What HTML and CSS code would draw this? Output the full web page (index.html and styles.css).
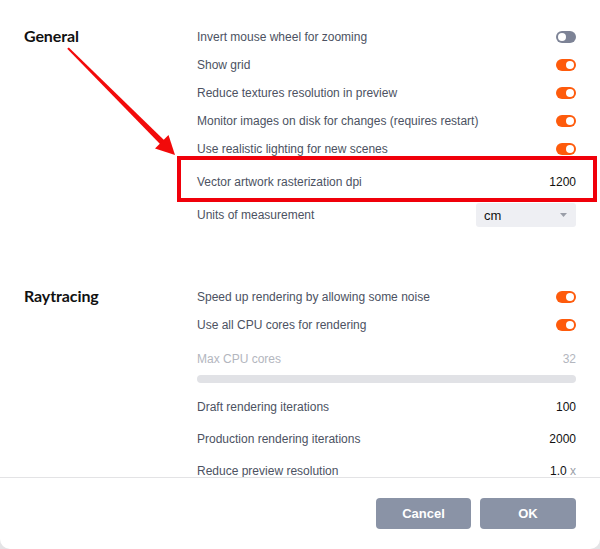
FILE: index.html
```html
<!DOCTYPE html>
<html>
<head>
<meta charset="utf-8">
<link rel="stylesheet" href="styles.css">
</head>
<body>
<div class="dialog">
  <div class="content">
    <section class="section">
      <h2 class="section-title">General</h2>
      <div class="rows">
        <div class="row"><span class="label">Invert mouse wheel for zooming</span><span class="toggle off"></span></div>
        <div class="row"><span class="label">Show grid</span><span class="toggle on"></span></div>
        <div class="row"><span class="label">Reduce textures resolution in preview</span><span class="toggle on"></span></div>
        <div class="row"><span class="label">Monitor images on disk for changes (requires restart)</span><span class="toggle on"></span></div>
        <div class="row"><span class="label">Use realistic lighting for new scenes</span><span class="toggle on"></span></div>
        <div class="row row-tall highlighted"><span class="label">Vector artwork rasterization dpi</span><span class="value">1200</span></div>
        <div class="row"><span class="label">Units of measurement</span>
          <span class="select">cm<svg class="caret" width="7" height="4" viewBox="0 0 7 4"><path d="M0 0h7L3.5 4z" fill="#9a9ea8"/></svg></span>
        </div>
      </div>
    </section>
    <section class="section section-ray">
      <h2 class="section-title">Raytracing</h2>
      <div class="rows">
        <div class="row"><span class="label">Speed up rendering by allowing some noise</span><span class="toggle on"></span></div>
        <div class="row"><span class="label">Use all CPU cores for rendering</span><span class="toggle on"></span></div>
        <div class="cpu">
          <div class="cpu-head"><span class="label faded">Max CPU cores</span><span class="value faded">32</span></div>
          <div class="slider"></div>
        </div>
        <div class="row row-32"><span class="label">Draft rendering iterations</span><span class="value">100</span></div>
        <div class="row row-32"><span class="label">Production rendering iterations</span><span class="value">2000</span></div>
        <div class="row row-32"><span class="label">Reduce preview resolution</span><span class="value">1.0 <span class="unit">x</span></span></div>
      </div>
    </section>
  </div>
  <div class="footer">
    <button class="btn">Cancel</button>
    <button class="btn">OK</button>
  </div>
  <svg class="arrow" width="600" height="549" viewBox="0 0 600 549">
    <polygon points="68.8,47.4 67.2,48.8 161,145 165,141" fill="#f20a0a"/>
    <polygon points="175,155 155,148.5 168.5,135" fill="#f20a0a"/>
  </svg>
</div>
</body>
</html>
```
FILE: styles.css
```css
* { box-sizing: border-box; }
html, body { margin: 0; padding: 0; }
body {
  background: #e4e4e6;
  font-family: "Liberation Sans", Arial, sans-serif;
  font-size: 12px;
  color: #4c5262;
}
.dialog {
  position: relative;
  width: 600px;
  height: 549px;
  background: #fff;
  border-radius: 0 0 10px 10px;
  display: flex;
  flex-direction: column;
  overflow: hidden;
}
.content {
  flex: 1;
  overflow: hidden;
  padding: 22px 24px 0 24px;
}
.section {
  display: flex;
}
.section-ray { margin-top: 54px; }
.section-title {
  width: 173px;
  margin: 0;
  font-family: "Lato", "Open Sans", sans-serif;
  font-weight: 700;
  font-size: 16px;
  color: #111;
  line-height: 28px;
  letter-spacing: -0.1px;
}
.rows {
  flex: 1;
  display: flex;
  flex-direction: column;
}
.row {
  height: 28px;
  display: flex;
  align-items: center;
  justify-content: space-between;
}
.label, .value { padding-top: 2px; }
.row-tall { height: 38px; }
.row-32 { height: 32px; }
.highlighted { position: relative; }
.highlighted::after {
  content: "";
  position: absolute;
  left: -20px;
  right: -21px;
  top: -6px;
  bottom: -2px;
  border: 4px solid #f0000a;
}
.label { white-space: nowrap; }
.value { color: #111; }
.faded { color: #b3b6be; }
.unit { color: #9a9ea8; padding-top: 0; }
.toggle {
  width: 20px;
  height: 12px;
  border-radius: 6px;
  position: relative;
  margin-top: 1px;
}
.toggle::after {
  content: "";
  position: absolute;
  top: 2px;
  width: 8px;
  height: 8px;
  border-radius: 50%;
  background: #fff;
}
.toggle.off { background: #7d8396; }
.toggle.off::after { left: 2px; }
.toggle.on { background: #fe5b0c; }
.toggle.on::after { right: 2px; }
.select {
  width: 100px;
  height: 24px;
  background: #eeeff3;
  border-radius: 3px;
  display: flex;
  align-items: center;
  justify-content: space-between;
  padding: 0 9px 0 8px;
  color: #111;
  font-size: 13px;
  margin-top: 2px;
}
.caret { display: block; }
.cpu {
  padding-top: 10px;
  padding-bottom: 7px;
}
.cpu-head {
  height: 20px;
  display: flex;
  align-items: center;
  justify-content: space-between;
}
.slider {
  margin-top: 7px;
  height: 8px;
  border-radius: 4px;
  background: #e1e2e6;
}
.footer {
  height: 72px;
  flex-shrink: 0;
  border-top: 1px solid #e3e3e5;
  display: flex;
  justify-content: flex-end;
  gap: 9px;
  padding: 20px 24px 0 0;
}
.btn {
  width: 96px;
  height: 31px;
  border: none;
  border-radius: 4px;
  background: #8a93a6;
  color: #fff;
  font-family: "Liberation Sans", Arial, sans-serif;
  font-weight: 700;
  font-size: 13px;
}
.btn:first-child { width: 95px; }
.arrow {
  position: absolute;
  left: 0;
  top: 0;
  pointer-events: none;
}
```
